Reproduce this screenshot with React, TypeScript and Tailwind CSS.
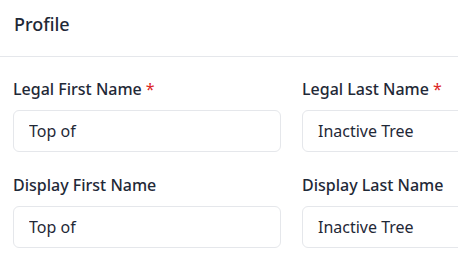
import { useState } from "react";

type FieldProps = { label: string; value: string; required?: boolean };

function Field({ label, value, required }: FieldProps) {
  const [text, setText] = useState(value);
  return (
    <div className="flex flex-col">
      <label className="mb-[11px] text-[16px] font-medium leading-5 text-[#1f2937]">
        {label}
        {required && <span className="ml-1 font-normal text-[#dc2626]">*</span>}
      </label>
      <input
        value={text}
        onChange={(e) => setText(e.target.value)}
        className="h-[42px] w-full rounded-md border border-[#e5e7eb] bg-white px-[15px] text-[16px] text-[#1f2937] outline-none"
      />
    </div>
  );
}

export default function App() {
  return (
    <div
      className="min-h-screen w-full overflow-hidden bg-white"
      style={{ fontFamily: '"Noto Sans", "Open Sans", sans-serif' }}
    >
      <div className="h-[57px] border-b border-[#e5e7eb] px-[14px] pt-[12px]">
        <h2 className="text-[18px] font-medium leading-6 text-[#1f2937]">Profile</h2>
      </div>
      <div className="grid w-[600px] grid-cols-[268px_268px] gap-x-[21px] gap-y-[23px] px-[13px] pt-[22px]">
        <Field label="Legal First Name" value="Top of" required />
        <Field label="Legal Last Name" value="Inactive Tree" required />
        <Field label="Display First Name" value="Top of" />
        <Field label="Display Last Name" value="Inactive Tree" />
      </div>
    </div>
  );
}
